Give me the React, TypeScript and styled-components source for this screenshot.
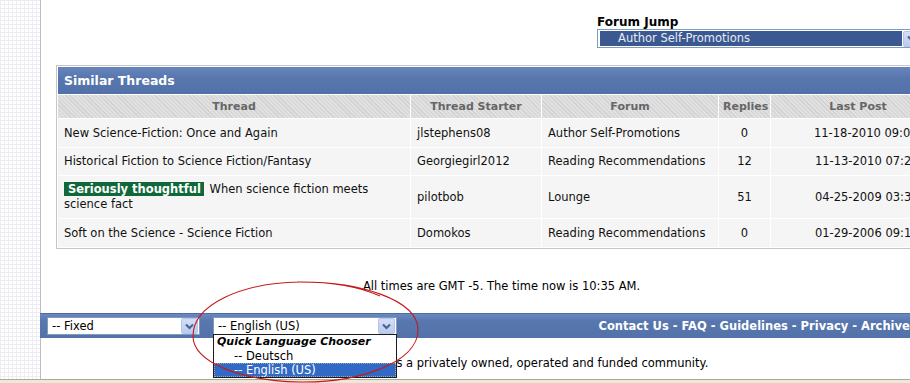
import React from "react";
import styled, { createGlobalStyle } from "styled-components";

const Global = createGlobalStyle`
  html, body { margin: 0; padding: 0; background: #ece9d8; }
  body { font-family: "DejaVu Sans", Verdana, sans-serif; font-size: 11.5px; color: #000; overflow: hidden; }
`;

const Frame = styled.div`
  position: relative;
  width: 910px;
  height: 383px;
  overflow: hidden;
  background: #ece9d8;
`;

const Viewport = styled.div`
  display: flex;
  height: 379px;
  border-bottom: 1px solid #aca899;
  background: #fff;
  overflow: hidden;
`;

const Gutter = styled.div`
  flex: 0 0 40px;
  background-color: #fff;
  background-image: linear-gradient(#ececf2 1px, transparent 1px),
    linear-gradient(90deg, #ececf2 1px, transparent 1px);
  background-size: 4px 4px;
`;

const Page = styled.div`
  flex: 0 0 921px;
  border-left: 1px solid #bdbdbd;
  background: #fff;
  position: relative;
`;

const JumpRow = styled.div`
  display: flex;
  justify-content: flex-end;
  padding: 16px 40px 0 0;
`;

const JumpBox = styled.div`
  display: flex;
  flex-direction: column;
`;

const JumpLabel = styled.div`
  font-weight: bold;
  font-size: 12px;
  line-height: 13px;
  color: #000;
`;

const JumpSelect = styled.div`
  box-sizing: border-box;
  width: 325px;
  height: 19px;
  border: 1px solid #7f9db9;
  padding: 1px 1px 1px 2px;
  display: flex;
  gap: 1px;
  background: #fff;
`;

const JumpValue = styled.div`
  flex: 1;
  background: #3b5890;
  color: #e6ebf5;
  padding-left: 18px;
  font-size: 11.5px;
  line-height: 15px;
`;

const ArrowButton = styled.div`
  flex: 0 0 15px;
  height: 14px;
  align-self: center;
  background: linear-gradient(#d3def9, #b9cbf1);
  border: 1px solid #b5c6ea;
  border-radius: 2px;
  display: flex;
  align-items: center;
  justify-content: center;
`;

const Table = styled.table`
  margin: 17px 15px 0;
  width: 891px;
  table-layout: fixed;
  border-collapse: separate;
  border-spacing: 1px;
  border: 1px solid #c6c6c6;
  background: #fff;
  font-size: 11.5px;
`;

const TitleCell = styled.td`
  height: 27px;
  padding: 0 6px;
  background: linear-gradient(#6685bb, #5877ae 40%, #5271a8);
  color: #fff;
  font-weight: bold;
  font-size: 12.5px;
  vertical-align: middle;
`;

const HeadCell = styled.td`
  height: 23px;
  padding: 0 4px;
  text-align: center;
  font-weight: bold;
  font-size: 11px;
  color: #666;
  background-color: #dadada;
  background-image: repeating-linear-gradient(45deg, #d2d2d2 0 1px, #e0e0e0 1px 3px);
  vertical-align: middle;
`;

const Row = styled.tr<{ $h: number }>`
  height: ${(p) => p.$h}px;
`;

const Cell = styled.td<{ $align?: string }>`
  padding: 0 6px;
  background: #f5f5f5;
  color: #111;
  line-height: 15px;
  vertical-align: middle;
  text-align: ${(p) => p.$align || "left"};
`;

const Prefix = styled.span`
  display: inline-block;
  background: #10673a;
  color: #fff;
  font-weight: bold;
  padding: 0 3px 0 4px;
  line-height: 14px;
  margin-right: 2px;
`;

const TimeLine = styled.div`
  text-align: center;
  margin-top: 31px;
  line-height: 13px;
  color: #000;
`;

const FooterBar = styled.div`
  margin: 20px 0 0 -1px;
  height: 25px;
  box-sizing: border-box;
  padding: 3px 17px 0 7px;
  background: linear-gradient(#6a89bf, #5877ae 30%, #5372a9);
  border-top: 1px solid #4e6ca3;
  display: flex;
  justify-content: space-between;
  align-items: flex-start;
`;

const SelectGroup = styled.div`
  display: flex;
  gap: 13px;
`;

const SelectWrap = styled.div`
  position: relative;
`;

const SelectBox = styled.div<{ $w: number }>`
  box-sizing: border-box;
  width: ${(p) => p.$w}px;
  height: 18px;
  border: 1px solid #7f9db9;
  background: #fff;
  display: flex;
  align-items: center;
  padding: 0 1px 0 4px;
`;

const SelectText = styled.span`
  flex: 1;
  color: #000;
`;

const Links = styled.div`
  color: #fff;
  font-weight: bold;
  line-height: 17px;
  white-space: nowrap;
  padding-top: 1px;
`;

const DropList = styled.div`
  position: absolute;
  left: 0;
  top: 17px;
  width: 184px;
  box-sizing: border-box;
  border: 1px solid #1c1c1c;
  background: #fff;
  z-index: 2;
  font-size: 11.5px;
`;

const DropItem = styled.div<{ $sel?: boolean; $group?: boolean }>`
  height: 14px;
  line-height: 14px;
  padding-left: ${(p) => (p.$group ? 3 : 20)}px;
  font-weight: ${(p) => (p.$group ? "bold" : "normal")};
  font-style: ${(p) => (p.$group ? "italic" : "normal")};
  font-size: ${(p) => (p.$group ? "11px" : "11.5px")};
  background: ${(p) => (p.$sel ? "#316ac5" : "transparent")};
  color: ${(p) => (p.$sel ? "#fff" : "#000")};
  outline: ${(p) => (p.$sel ? "1px dotted #9ab" : "none")};
  outline-offset: -1px;
  white-space: nowrap;
`;

const Copyright = styled.div`
  text-align: center;
  margin-top: 19px;
  line-height: 13px;
  color: #000;
`;

const Annotation = styled.svg`
  position: absolute;
  inset: 0;
  pointer-events: none;
  z-index: 5;
`;

const Chevron = () => (
  <svg width="9" height="7" viewBox="0 0 9 7">
    <path d="M1 1.5 L4.5 5 L8 1.5" fill="none" stroke="#4d6185" strokeWidth="2" />
  </svg>
);

const threads = [
  { title: "New Science-Fiction: Once and Again", starter: "jlstephens08", forum: "Author Self-Promotions", replies: "0", last: "11-18-2010 09:01 AM", h: 28 },
  { title: "Historical Fiction to Science Fiction/Fantasy", starter: "Georgiegirl2012", forum: "Reading Recommendations", replies: "12", last: "11-13-2010 07:28 PM", h: 27 },
  { title: "When science fiction meets science fact", prefix: "Seriously thoughtful", starter: "pilotbob", forum: "Lounge", replies: "51", last: "04-25-2009 03:31 PM", h: 42 },
  { title: "Soft on the Science - Science Fiction", starter: "Domokos", forum: "Reading Recommendations", replies: "0", last: "01-29-2006 09:16 PM", h: 28 },
];

export default function App() {
  return (
    <Frame>
      <Global />
      <Viewport>
        <Gutter />
        <Page>
          <JumpRow>
            <JumpBox>
              <JumpLabel>Forum Jump</JumpLabel>
              <JumpSelect>
                <JumpValue>Author Self-Promotions</JumpValue>
                <ArrowButton>
                  <Chevron />
                </ArrowButton>
              </JumpSelect>
            </JumpBox>
          </JumpRow>

          <Table>
            <colgroup>
              <col style={{ width: 352 }} />
              <col style={{ width: 130 }} />
              <col style={{ width: 176 }} />
              <col style={{ width: 51 }} />
              <col style={{ width: 174 }} />
            </colgroup>
            <tbody>
              <tr>
                <TitleCell colSpan={5}>Similar Threads</TitleCell>
              </tr>
              <tr>
                <HeadCell>Thread</HeadCell>
                <HeadCell>Thread Starter</HeadCell>
                <HeadCell>Forum</HeadCell>
                <HeadCell>Replies</HeadCell>
                <HeadCell>Last Post</HeadCell>
              </tr>
              {threads.map((t) => (
                <Row key={t.title} $h={t.h}>
                  <Cell>
                    {t.prefix && <Prefix>{t.prefix}</Prefix>} {t.title}
                  </Cell>
                  <Cell>{t.starter}</Cell>
                  <Cell>{t.forum}</Cell>
                  <Cell $align="center">{t.replies}</Cell>
                  <Cell $align="right">{t.last}</Cell>
                </Row>
              ))}
            </tbody>
          </Table>

          <TimeLine>All times are GMT -5. The time now is 10:35 AM.</TimeLine>

          <FooterBar>
            <SelectGroup>
              <SelectWrap>
                <SelectBox $w={153}>
                  <SelectText>-- Fixed</SelectText>
                  <ArrowButton>
                    <Chevron />
                  </ArrowButton>
                </SelectBox>
              </SelectWrap>
              <SelectWrap>
                <SelectBox $w={184}>
                  <SelectText>-- English (US)</SelectText>
                  <ArrowButton>
                    <Chevron />
                  </ArrowButton>
                </SelectBox>
                <DropList>
                  <DropItem $group>Quick Language Chooser</DropItem>
                  <DropItem>-- Deutsch</DropItem>
                  <DropItem $sel>-- English (US)</DropItem>
                </DropList>
              </SelectWrap>
            </SelectGroup>
            <Links>Contact Us - FAQ - Guidelines - Privacy - Archive - Top</Links>
          </FooterBar>

          <Copyright>MobileRead.com is a privately owned, operated and funded community.</Copyright>
        </Page>
      </Viewport>
      <Annotation width="910" height="383" viewBox="0 0 910 383">
        <path
          d="M297 282 C 360 281, 418 300, 418 330 C 418 362, 360 383, 300 382 C 240 381, 193 362, 193 336 C 193 305, 240 283, 300 282 C 330 282, 360 287, 380 296"
          fill="none"
          stroke="#c41a1a"
          strokeWidth="1.1"
        />
      </Annotation>
    </Frame>
  );
}
